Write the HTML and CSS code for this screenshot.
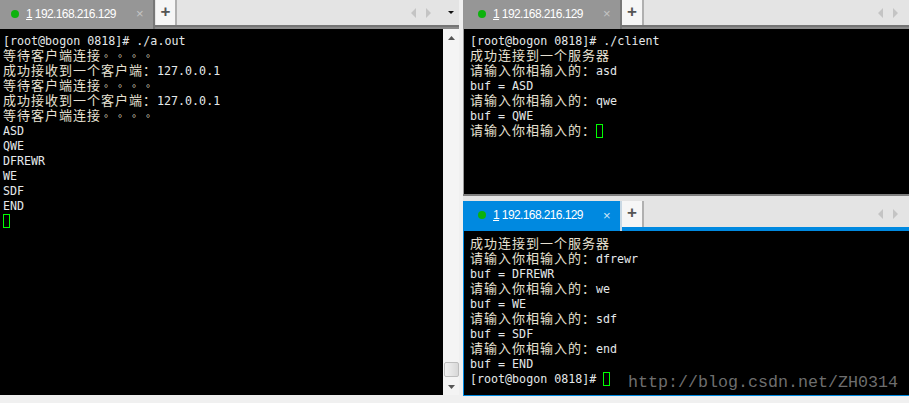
FILE: index.html
```html
<!DOCTYPE html>
<html lang="zh">
<head>
<meta charset="utf-8">
<title>Terminals</title>
<link rel="stylesheet" href="styles.css">
</head>
<body>
<div class="app">
  <section class="pane pane-left">
    <div class="tabbar">
      <div class="tab"><span class="dot"></span><span class="tab-title"><u>1</u> 192.168.216.129</span><span class="close">×</span></div>
      <div class="plus">+</div>
      <div class="spacer"></div>
      <svg class="arrows" width="20" height="10" viewBox="0 0 20 10"><path d="M5 0v10L0 5zM15 0v10l5-5z"/></svg>
      <svg class="menu" width="6" height="3" viewBox="0 0 6 3"><path d="M0 0h6L3 3z"/></svg>
    </div>
    <div class="body">
      <div class="term">
        <div class="line">[root@bogon 0818]# ./a.out</div>
        <div class="line"><span class="cn">等待客户端连接</span><span class="cn pt" lang="zh-TW">。。。。</span></div>
        <div class="line"><span class="cn">成功接收到一个客户端：</span>127.0.0.1</div>
        <div class="line"><span class="cn">等待客户端连接</span><span class="cn pt" lang="zh-TW">。。。。</span></div>
        <div class="line"><span class="cn">成功接收到一个客户端：</span>127.0.0.1</div>
        <div class="line"><span class="cn">等待客户端连接</span><span class="cn pt" lang="zh-TW">。。。。</span></div>
        <div class="line">ASD</div>
        <div class="line">QWE</div>
        <div class="line">DFREWR</div>
        <div class="line">WE</div>
        <div class="line">SDF</div>
        <div class="line">END</div>
        <div class="line"><span class="cursor"></span></div>
      </div>
      <div class="scrollbar">
        <svg class="sb-up" width="7" height="4" viewBox="0 0 7 4"><path d="M3.5 0L7 4H0z"/></svg>
        <div class="sb-track"></div>
        <div class="sb-thumb"></div>
        <svg class="sb-down" width="7" height="4" viewBox="0 0 7 4"><path d="M0 0h7L3.5 4z"/></svg>
      </div>
    </div>
  </section>
  <div class="right">
    <section class="pane pane-top">
      <div class="tabbar">
        <div class="tab"><span class="dot"></span><span class="tab-title"><u>1</u> 192.168.216.129</span><span class="close">×</span></div>
        <div class="plus">+</div>
        <div class="spacer"></div>
        <svg class="arrows" width="20" height="10" viewBox="0 0 20 10"><path d="M5 0v10L0 5zM15 0v10l5-5z"/></svg>
      </div>
      <div class="body">
        <div class="term">
          <div class="line">[root@bogon 0818]# ./client</div>
          <div class="line"><span class="cn">成功连接到一个服务器</span></div>
          <div class="line"><span class="cn">请输入你相输入的：</span>asd</div>
          <div class="line">buf = ASD</div>
          <div class="line"><span class="cn">请输入你相输入的：</span>qwe</div>
          <div class="line">buf = QWE</div>
          <div class="line"><span class="cn">请输入你相输入的：</span><span class="cursor"></span></div>
        </div>
      </div>
    </section>
    <section class="pane pane-bottom">
      <div class="tabbar">
        <div class="tab"><span class="dot"></span><span class="tab-title"><u>1</u> 192.168.216.129</span><span class="close">×</span></div>
        <div class="plus">+</div>
        <div class="spacer"></div>
        <svg class="arrows" width="20" height="10" viewBox="0 0 20 10"><path d="M5 0v10L0 5zM15 0v10l5-5z"/></svg>
      </div>
      <div class="body">
        <div class="term">
          <div class="line"><span class="cn">成功连接到一个服务器</span></div>
          <div class="line"><span class="cn">请输入你相输入的：</span>dfrewr</div>
          <div class="line">buf = DFREWR</div>
          <div class="line"><span class="cn">请输入你相输入的：</span>we</div>
          <div class="line">buf = WE</div>
          <div class="line"><span class="cn">请输入你相输入的：</span>sdf</div>
          <div class="line">buf = SDF</div>
          <div class="line"><span class="cn">请输入你相输入的：</span>end</div>
          <div class="line">buf = END</div>
          <div class="line">[root@bogon 0818]# <span class="cursor"></span></div>
        </div>
        <div class="watermark">http://blog.csdn.net/ZH0314</div>
      </div>
    </section>
  </div>
</div>
</body>
</html>
```

FILE: styles.css
```css
* { box-sizing: border-box; }
html, body { margin: 0; padding: 0; }
body { width: 909px; height: 403px; overflow: hidden; background: #f0f0f0; }
.app { display: flex; width: 909px; height: 396px; }
.pane { display: flex; flex-direction: column; }
.pane-left { width: 459px; height: 395px; }
.right { width: 446px; margin-left: 4px; display: flex; flex-direction: column; }
.pane-top { height: 196px; flex: none; border-bottom: 2px solid #7f7f7f; }
.pane-bottom { flex: 1; min-height: 0; }

.tabbar { display: flex; align-items: center; height: 29px; flex: none; padding-bottom: 2px; background: #e4e4e4; border-bottom: 2px solid #8a8a8a; box-shadow: inset 0 -2px 0 #757575; }
.tab { display: flex; align-items: center; align-self: stretch; width: 155px; margin-bottom: -4px; padding-bottom: 2px; background: #969696; border-right: 2px solid #777; color: #fff; font: 12px/1 "Liberation Sans", sans-serif; letter-spacing: -0.6px; }
.dot { flex: none; width: 8px; height: 8px; margin-left: 11px; border-radius: 50%; background: #0cb20c; }
.tab-title { flex: none; width: 110px; margin-left: 7px; white-space: pre; }
.close { color: #c4c4c4; font-size: 13px; letter-spacing: 0; }
.plus { flex: none; align-self: stretch; width: 21px; margin-left: 1px; background: #f6f6f6; border-right: 2px solid #b0b0b0; color: #555; font: bold 17px/24px "Liberation Sans", sans-serif; text-align: center; }
.spacer { flex: 1; }
.arrows { margin-right: 17px; fill: #c4c4c4; }
.menu { margin-right: 5px; fill: #111; }

.body { flex: 1; display: flex; position: relative; min-height: 0; background: #000; }
.term { flex: 1; padding: 5px 0 0 3px; overflow: hidden; color: #e4e8ea; font: 11.67px/15px "DejaVu Sans Mono", monospace; }
.line { height: 15px; white-space: pre; }
.cn { color: #e6e0d2; font-family: "Noto Sans CJK SC", sans-serif; font-size: 13px; line-height: 0; letter-spacing: 1px; }
.pt { font-family: "Noto Sans CJK TC", sans-serif; font-size: 10px; letter-spacing: 4px; }
.cursor { display: inline-block; width: 7px; height: 14px; border: 1px solid #00ff00; vertical-align: -3px; }

.scrollbar { flex: none; display: flex; flex-direction: column; align-items: center; width: 16px; padding-top: 7px; background: #f4f4f4; }
.sb-up, .sb-down { flex: none; fill: #555; }
.sb-track { flex: 1; }
.sb-thumb { flex: none; width: 15px; height: 15px; margin-bottom: 8px; background: linear-gradient(90deg, #f2f2f2, #d8d8d8); border: 1px solid #bdbdbd; border-radius: 2px; }
.sb-down { margin-bottom: 6px; }

.pane-top .arrows, .pane-bottom .arrows { margin-right: 11px; }
.pane-top .tab, .pane-bottom .tab { width: 159px; }
.pane-top .dot, .pane-bottom .dot { margin-left: 15px; }
.pane-top .plus, .pane-bottom .plus { margin-left: 0; width: 22px; }
.pane-top .body { border-left: 1px solid #999; }
.pane-top .term, .pane-bottom .term { padding-left: 6px; }

.pane-bottom .tabbar { height: 35px; padding: 5px 0 0; border-bottom: 4px solid #0089e0; box-shadow: none; }
.pane-bottom .tab { background: #0089e0; border-right-color: #c8d8e4; }
.pane-bottom .close { color: #cfe6f7; }
.pane-bottom .body { border: 1px solid #0089e0; border-width: 0 0 1px 1px; }
.pane-bottom .term { padding-top: 6px; }
.watermark { position: absolute; right: 11px; bottom: 2px; color: #6e6e6e; font: 16.67px/20px "Liberation Mono", monospace; white-space: nowrap; }
```
